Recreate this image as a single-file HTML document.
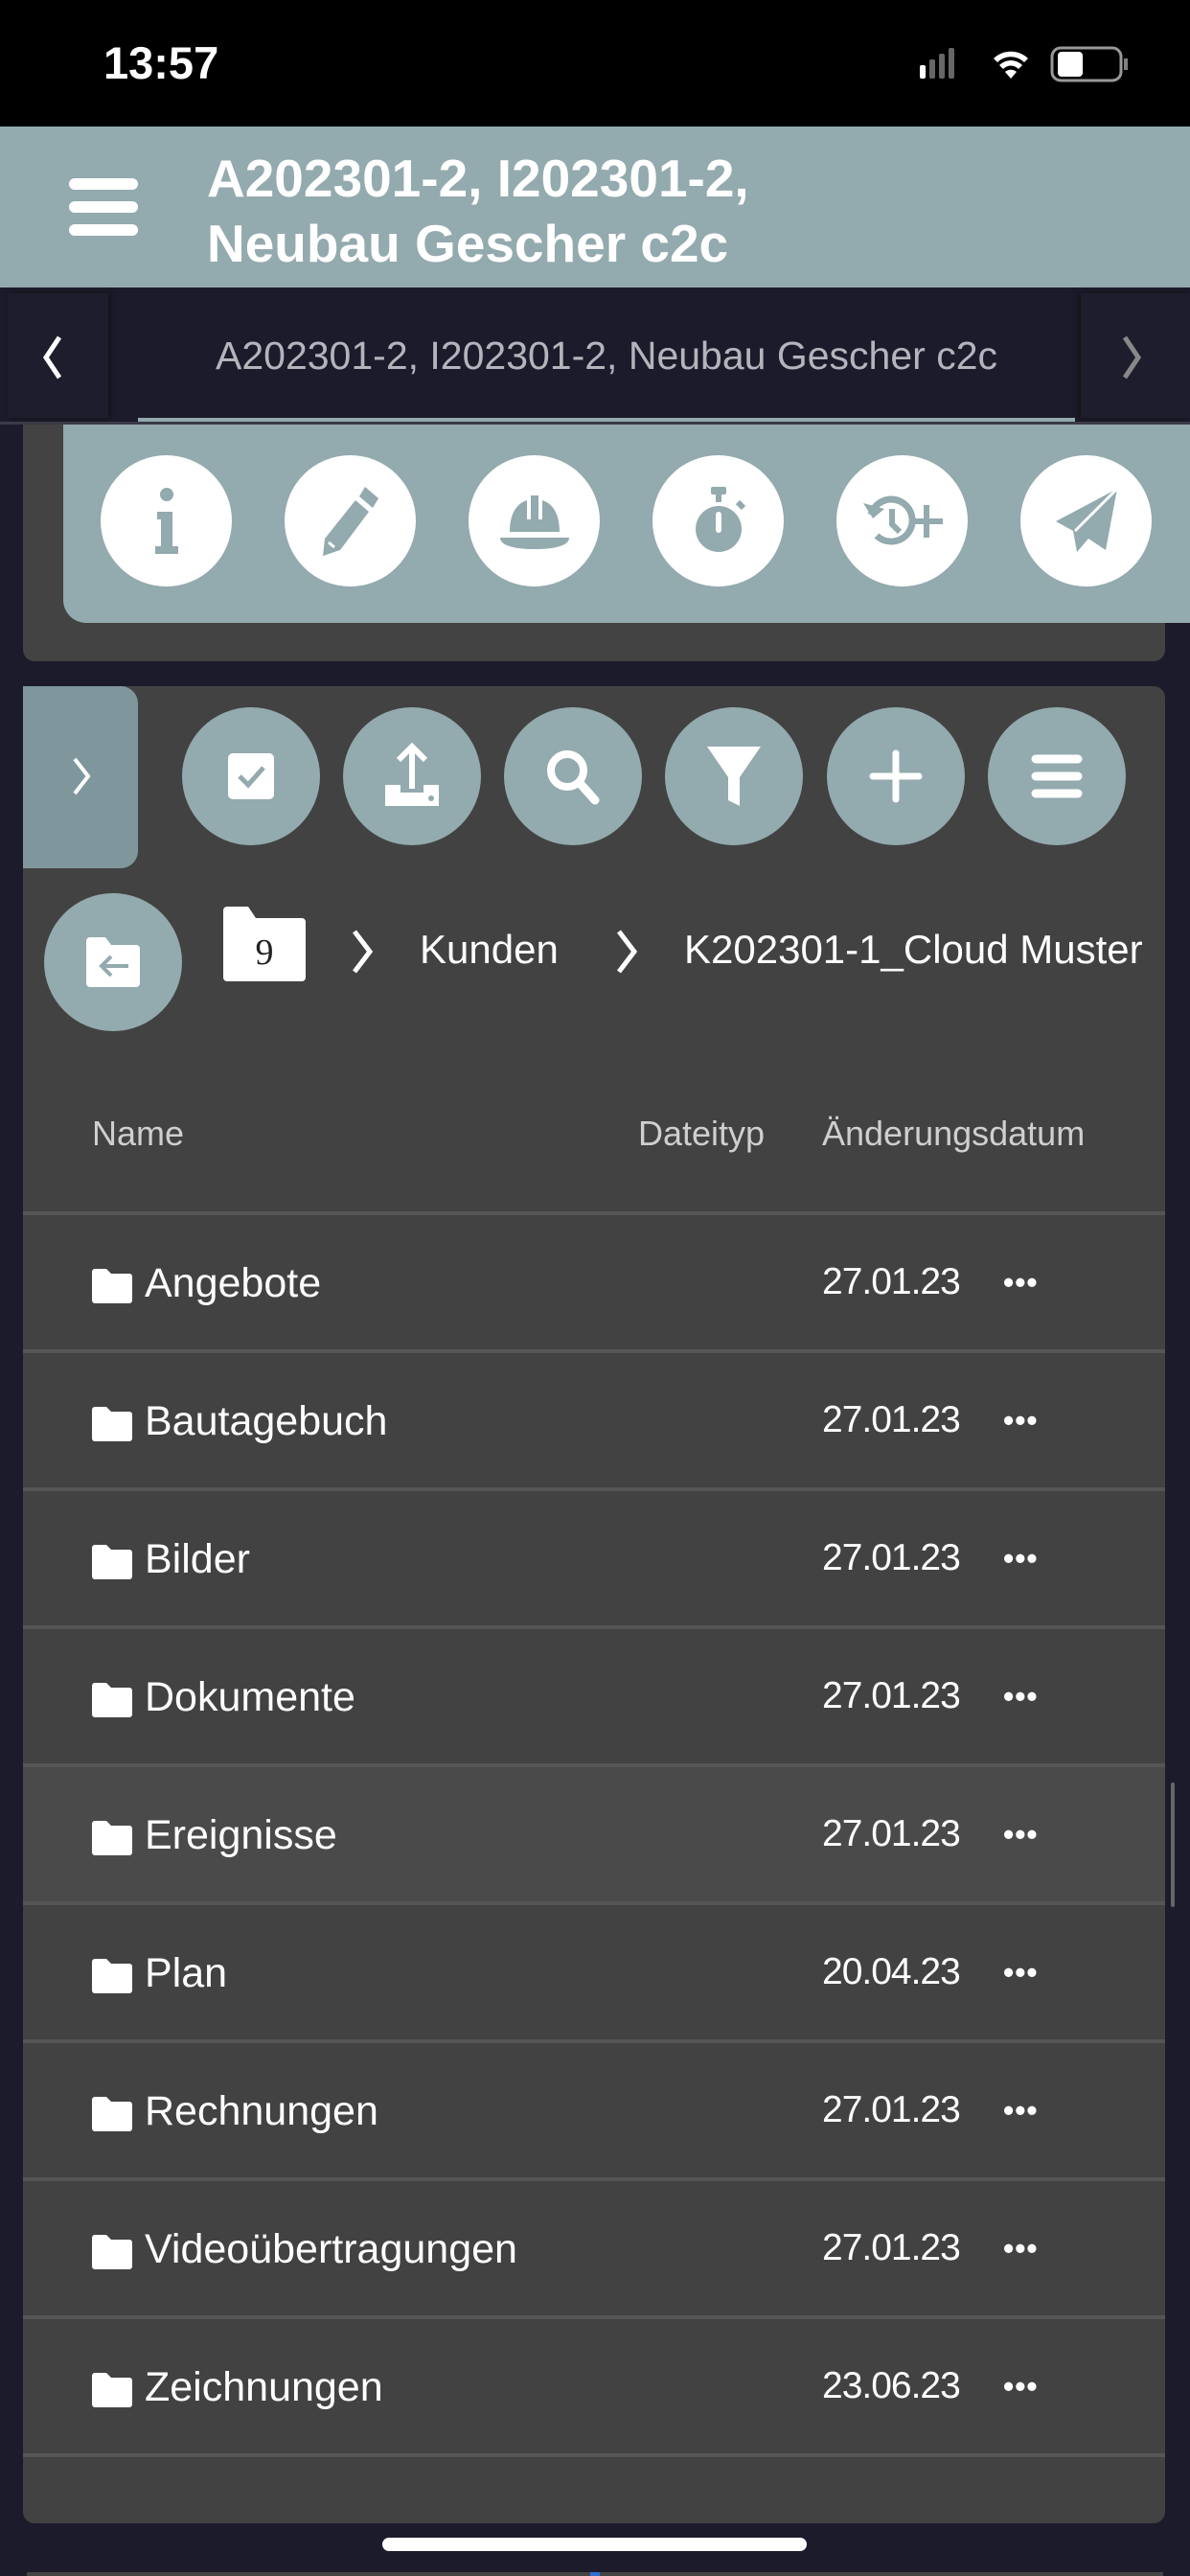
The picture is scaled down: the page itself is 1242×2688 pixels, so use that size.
<!DOCTYPE html>
<html><head><meta charset="utf-8"><style>
*{margin:0;padding:0;box-sizing:border-box}
body{width:1242px;height:2688px;background:#1c1b2b;position:relative;overflow:hidden;font-family:"Liberation Sans",sans-serif;color:#fff}
.a{position:absolute}
.circ{position:absolute;border-radius:50%;display:flex;align-items:center;justify-content:center}
.w{background:#fff;width:137px;height:137px;top:475px}
.t{background:#93aaae;width:144px;height:144px;top:738px}
.row{position:absolute;left:24px;width:1192px;height:144px;border-bottom:4px solid #555}
.row .fi{position:absolute;left:72px;top:56px}
.row .n{position:absolute;left:127px;top:47px;font-size:43px}
.row .d{position:absolute;left:834px;top:48px;font-size:39px;letter-spacing:-1px}
.row .m{position:absolute;left:1023px;top:52px;font-size:32px;letter-spacing:1px;font-weight:bold}
</style></head><body>
<div class="a" style="left:0;top:0;width:1242px;height:132px;background:#000"></div>
<div class="a" style="left:108px;top:38px;font-size:47px;font-weight:bold">13:57</div>
<svg class="a" style="left:958px;top:48px" width="230" height="40" viewBox="0 0 230 40">
<g fill="#fff"><rect x="2" y="20" width="6" height="14" rx="2"/><rect x="12" y="14" width="6" height="20" rx="2" opacity=".4"/><rect x="22" y="8" width="6" height="26" rx="2" opacity=".4"/><rect x="32" y="2" width="6" height="32" rx="2" opacity=".4"/>
<path d="M97 34l-6-7a9 9 0 0 1 12 0z"/><path d="M85 20a17 17 0 0 1 24 0l-4 4a11 11 0 0 0-16 0z"/><path d="M79 13a26 26 0 0 1 36 0l-4 4a20 20 0 0 0-28 0z"/>
<rect x="146" y="6" width="26" height="26" rx="4" /></g>
<rect x="140" y="2" width="72" height="34" rx="9" fill="none" stroke="#fff" stroke-width="3" opacity=".6"/><rect x="215" y="13" width="4" height="12" fill="#fff" opacity=".5"/>
</svg>
<div class="a" style="left:0;top:132px;width:1242px;height:168px;background:#93aaae"></div>
<div class="a" style="left:72px;top:186px;width:72px;height:12px;border-radius:6px;background:#fff"></div>
<div class="a" style="left:72px;top:210px;width:72px;height:12px;border-radius:6px;background:#fff"></div>
<div class="a" style="left:72px;top:234px;width:72px;height:12px;border-radius:6px;background:#fff"></div>
<div class="a" style="left:216px;top:152px;font-size:55px;font-weight:bold;line-height:68px">A202301-2, I202301-2,<br>Neubau Gescher c2c</div>
<div class="a" style="left:8px;top:306px;width:105px;height:130px;background:#1e1d2d;box-shadow:2px 0 6px #111"></div>
<div class="a" style="left:1128px;top:306px;width:114px;height:130px;background:#1e1d2d;box-shadow:-2px 0 6px #111"></div>
<svg class="a" style="left:40px;top:348px" width="30" height="50"><path d="M22 4L8 25l14 21" stroke="#fff" stroke-width="5" fill="none"/></svg>
<svg class="a" style="left:1166px;top:348px" width="30" height="50"><path d="M8 4l14 21L8 46" stroke="#888" stroke-width="5" fill="none"/></svg>
<div class="a" style="left:144px;top:348px;width:978px;text-align:center;font-size:41px;color:#b4b4bc">A202301-2, I202301-2, Neubau Gescher c2c</div>
<div class="a" style="left:144px;top:436px;width:978px;height:6px;background:#93aaae"></div>
<div class="a" style="left:0;top:440px;width:1242px;height:3px;background:#3a3a48"></div>
<div class="a" style="left:24px;top:443px;width:1192px;height:247px;background:#434343;border-radius:0 0 12px 12px"></div>
<div class="a" style="left:66px;top:443px;width:1176px;height:207px;background:#93aaae;border-radius:0 0 0 24px"></div>
<div class="circ w" style="left:105px"><svg width="40" height="80" viewBox="0 0 40 80"><circle cx="20" cy="12" r="7" fill="#93aaae"/><path d="M10 30h16v36h6v8H8v-8h6V38h-4z" fill="#93aaae"/></svg></div>
<div class="circ w" style="left:297px"><svg width="70" height="80" viewBox="0 0 70 80"><path d="M50 4l14 12-6 10-14-12zM40 18l14 12-30 40-18 6 2-18z" fill="#93aaae"/><path d="M12 62l6 5" stroke="#fff" stroke-width="3"/></svg></div>
<div class="circ w" style="left:489px"><svg width="80" height="70" viewBox="0 0 80 70"><path d="M14 46c0-20 8-30 18-33v20h4V8h8v25h4V13c10 3 18 13 18 33z" fill="#93aaae"/><path d="M4 52h72c0 8-14 12-36 12S4 60 4 52z" fill="#93aaae"/></svg></div>
<div class="circ w" style="left:681px"><svg width="60" height="80" viewBox="0 0 60 80"><rect x="22" y="4" width="16" height="8" rx="2" fill="#93aaae"/><rect x="27" y="10" width="6" height="10" fill="#93aaae"/><circle cx="30" cy="48" r="24" fill="#93aaae"/><rect x="27" y="30" width="6" height="22" rx="3" fill="#fff"/><path d="M50 20l6 6" stroke="#93aaae" stroke-width="6"/></svg></div>
<div class="circ w" style="left:873px"><svg width="90" height="70" viewBox="0 0 90 70"><path d="M12 28a22 22 0 1 1 6 22" stroke="#93aaae" stroke-width="7" fill="none"/><path d="M4 16l10 16 12-10z" fill="#93aaae"/><path d="M34 22v16l8 8" stroke="#93aaae" stroke-width="6" fill="none"/><path d="M70 18v34M53 35h34" stroke="#93aaae" stroke-width="6"/></svg></div>
<div class="circ w" style="left:1065px"><svg width="80" height="80" viewBox="0 0 80 80"><path d="M72 6L8 40l18 10 4 22 12-14 18 12z" fill="#93aaae"/><path d="M72 6L28 50" stroke="#fff" stroke-width="3"/></svg></div>
<div class="a" style="left:24px;top:716px;width:1192px;height:1917px;background:#424242;border-radius:12px"></div>
<div class="a" style="left:24px;top:716px;width:120px;height:190px;background:#7f979c;border-radius:0 18px 18px 0"></div>
<svg class="a" style="left:70px;top:788px" width="30" height="44"><path d="M8 4l14 18L8 40" stroke="#fff" stroke-width="4" fill="none"/></svg>
<div class="circ t" style="left:190px"><svg width="52" height="52" viewBox="0 0 52 52"><rect x="2" y="2" width="48" height="48" rx="5" fill="#fff"/><path d="M14 26l9 9 16-18" stroke="#93aaae" stroke-width="5" fill="none"/></svg></div>
<div class="circ t" style="left:358px"><svg width="60" height="70" viewBox="0 0 60 70"><path d="M30 4v44M16 18L30 4l14 14" stroke="#fff" stroke-width="6" fill="none"/><path d="M2 44h16v8h24v-8h16v22H2z" fill="#fff"/><circle cx="50" cy="58" r="3" fill="#93aaae"/></svg></div>
<div class="circ t" style="left:526px"><svg width="60" height="60" viewBox="0 0 60 60"><circle cx="24" cy="24" r="17" stroke="#fff" stroke-width="8" fill="none"/><path d="M37 37l16 18" stroke="#fff" stroke-width="9" stroke-linecap="round"/></svg></div>
<div class="circ t" style="left:694px"><svg width="60" height="70" viewBox="0 0 60 70"><path d="M2 4h56L36 36v30l-12-6V36z" fill="#fff"/></svg></div>
<div class="circ t" style="left:863px"><svg width="56" height="56"><path d="M28 4v48M4 28h48" stroke="#fff" stroke-width="7" stroke-linecap="round"/></svg></div>
<div class="circ t" style="left:1031px"><svg width="56" height="56"><path d="M6 10h44M6 28h44M6 46h44" stroke="#fff" stroke-width="9" stroke-linecap="round"/></svg></div>
<div class="circ t" style="left:46px;top:932px"><svg width="60" height="56" viewBox="0 0 60 56"><path d="M2 6a4 4 0 0 1 4-4h16l6 8h26a4 4 0 0 1 4 4v36a4 4 0 0 1-4 4H6a4 4 0 0 1-4-4z" fill="#fff"/><path d="M46 32H18M28 22l-10 10 10 10" stroke="#93aaae" stroke-width="4" fill="none"/></svg></div>
<svg class="a" style="left:233px;top:946px" width="86" height="78" viewBox="0 0 86 78"><path d="M0 4a4 4 0 0 1 4-4h22l8 12h48a4 4 0 0 1 4 4v58a4 4 0 0 1-4 4H4a4 4 0 0 1-4-4z" fill="#fff"/><text x="43" y="60" text-anchor="middle" font-family="Liberation Serif,serif" font-size="38" fill="#222">9</text></svg>
<svg class="a" style="left:364px;top:968px" width="30" height="50"><path d="M6 4l16 21L6 46" stroke="#fff" stroke-width="5" fill="none"/></svg>
<div class="a" style="left:438px;top:967px;font-size:42px">Kunden</div>
<svg class="a" style="left:640px;top:968px" width="30" height="50"><path d="M6 4l16 21L6 46" stroke="#fff" stroke-width="5" fill="none"/></svg>
<div class="a" style="left:714px;top:967px;font-size:42px;white-space:nowrap">K202301-1_Cloud Muster</div>
<div class="a" style="left:96px;top:1162px;font-size:36px;color:#cfcfcf">Name</div>
<div class="a" style="left:666px;top:1162px;font-size:36px;color:#cfcfcf">Dateityp</div>
<div class="a" style="left:858px;top:1162px;font-size:36px;color:#cfcfcf">Änderungsdatum</div>
<div class="a" style="left:24px;top:1264px;width:1192px;height:4px;background:#555"></div>
<div class="row" style="top:1268px"><svg class="fi" width="42" height="36"><path d="M0 3a3 3 0 0 1 3-3h12l5 5h19a3 3 0 0 1 3 3v25a3 3 0 0 1-3 3H3a3 3 0 0 1-3-3z" fill="#fff"/></svg><span class="n">Angebote</span><span class="d">27.01.23</span><span class="m">•••</span></div>
<div class="row" style="top:1412px"><svg class="fi" width="42" height="36"><path d="M0 3a3 3 0 0 1 3-3h12l5 5h19a3 3 0 0 1 3 3v25a3 3 0 0 1-3 3H3a3 3 0 0 1-3-3z" fill="#fff"/></svg><span class="n">Bautagebuch</span><span class="d">27.01.23</span><span class="m">•••</span></div>
<div class="row" style="top:1556px"><svg class="fi" width="42" height="36"><path d="M0 3a3 3 0 0 1 3-3h12l5 5h19a3 3 0 0 1 3 3v25a3 3 0 0 1-3 3H3a3 3 0 0 1-3-3z" fill="#fff"/></svg><span class="n">Bilder</span><span class="d">27.01.23</span><span class="m">•••</span></div>
<div class="row" style="top:1700px"><svg class="fi" width="42" height="36"><path d="M0 3a3 3 0 0 1 3-3h12l5 5h19a3 3 0 0 1 3 3v25a3 3 0 0 1-3 3H3a3 3 0 0 1-3-3z" fill="#fff"/></svg><span class="n">Dokumente</span><span class="d">27.01.23</span><span class="m">•••</span></div>
<div class="row" style="top:1844px;background:#4a4a4a"><svg class="fi" width="42" height="36"><path d="M0 3a3 3 0 0 1 3-3h12l5 5h19a3 3 0 0 1 3 3v25a3 3 0 0 1-3 3H3a3 3 0 0 1-3-3z" fill="#fff"/></svg><span class="n">Ereignisse</span><span class="d">27.01.23</span><span class="m">•••</span></div>
<div class="row" style="top:1988px"><svg class="fi" width="42" height="36"><path d="M0 3a3 3 0 0 1 3-3h12l5 5h19a3 3 0 0 1 3 3v25a3 3 0 0 1-3 3H3a3 3 0 0 1-3-3z" fill="#fff"/></svg><span class="n">Plan</span><span class="d">20.04.23</span><span class="m">•••</span></div>
<div class="row" style="top:2132px"><svg class="fi" width="42" height="36"><path d="M0 3a3 3 0 0 1 3-3h12l5 5h19a3 3 0 0 1 3 3v25a3 3 0 0 1-3 3H3a3 3 0 0 1-3-3z" fill="#fff"/></svg><span class="n">Rechnungen</span><span class="d">27.01.23</span><span class="m">•••</span></div>
<div class="row" style="top:2276px"><svg class="fi" width="42" height="36"><path d="M0 3a3 3 0 0 1 3-3h12l5 5h19a3 3 0 0 1 3 3v25a3 3 0 0 1-3 3H3a3 3 0 0 1-3-3z" fill="#fff"/></svg><span class="n">Videoübertragungen</span><span class="d">27.01.23</span><span class="m">•••</span></div>
<div class="row" style="top:2420px"><svg class="fi" width="42" height="36"><path d="M0 3a3 3 0 0 1 3-3h12l5 5h19a3 3 0 0 1 3 3v25a3 3 0 0 1-3 3H3a3 3 0 0 1-3-3z" fill="#fff"/></svg><span class="n">Zeichnungen</span><span class="d">23.06.23</span><span class="m">•••</span></div>
<div class="a" style="left:1222px;top:1860px;width:4px;height:130px;background:#666;border-radius:2px"></div>
<div class="a" style="left:399px;top:2648px;width:443px;height:14px;border-radius:7px;background:#fff"></div>
<div class="a" style="left:28px;top:2684px;width:1186px;height:4px;background:#444"></div>
<div class="a" style="left:616px;top:2684px;width:10px;height:4px;background:#2f6fd6"></div>
</body></html>
